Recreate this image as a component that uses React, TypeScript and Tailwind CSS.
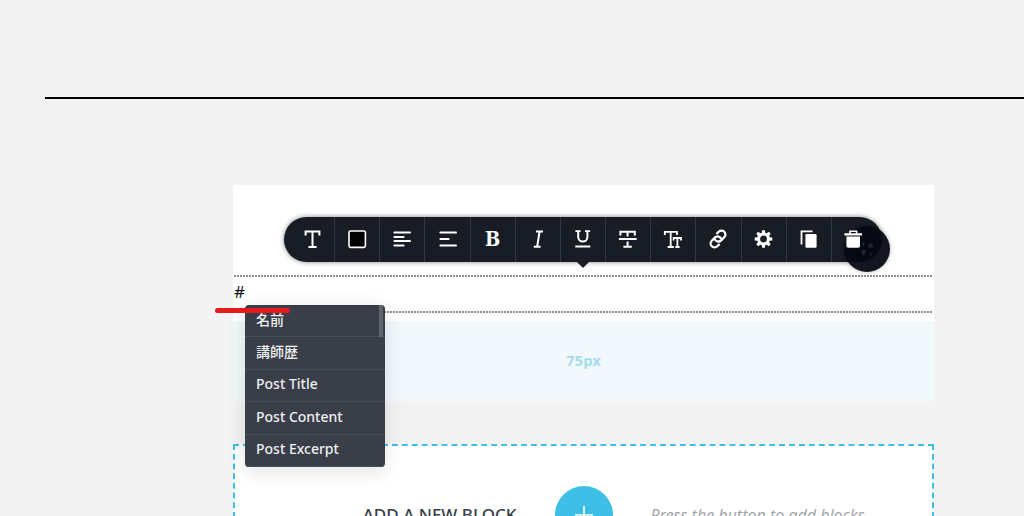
import type { ReactNode } from 'react';

const stroke = { fill: 'none', stroke: 'currentColor', strokeWidth: 2 } as const;

function Icon({ children }: { children: ReactNode }) {
  return (
    <svg viewBox="0 0 20 20" className="size-5 shrink-0" aria-hidden="true">
      {children}
    </svg>
  );
}

const tools: { label: string; icon: ReactNode }[] = [
  {
    label: 'Text style',
    icon: (
      <Icon>
        <path {...stroke} strokeWidth={2} d="M3.6 6.5V2.5H17.4V6.5M10.5 2.5V18M6.4 18H14.6" />
      </Icon>
    ),
  },
  {
    label: 'Colour',
    icon: (
      <Icon>
        <rect x="2" y="2" width="16.4" height="16.4" rx="1.6" fill="#000" stroke="#fff" strokeWidth="1.6" />
      </Icon>
    ),
  },
  {
    label: 'Align',
    icon: (
      <Icon>
        <path {...stroke} strokeLinecap="round" d="M2.4 3.6H18M2.4 7.9H11.6M2.4 12.1H18M2.4 16.4H11.6" />
      </Icon>
    ),
  },
  {
    label: 'Line height',
    icon: (
      <Icon>
        <path {...stroke} strokeLinecap="round" d="M2.4 3.6H18M2.4 10H10.6M2.4 16.4H18" />
      </Icon>
    ),
  },
  {
    label: 'Bold',
    icon: <span className="font-['DejaVu_Serif_Condensed','DejaVu_Serif',serif] text-xl leading-5 font-bold">B</span>,
  },
  {
    label: 'Italic',
    icon: (
      <Icon>
        <path {...stroke} strokeWidth={2} d="M8 2.5H15M11.6 2.5L9.1 17.8M5.8 17.8H12.6" />
      </Icon>
    ),
  },
  {
    label: 'Underline',
    icon: (
      <Icon>
        <path {...stroke} d="M5.2 2V8A4.6 4.6 0 0 0 14.4 8V2M2.3 17.6H17.3" />
        <path {...stroke} strokeWidth={1.7} d="M2.4 2.2H7.6M12 2.2H17.2" />
      </Icon>
    ),
  },
  {
    label: 'Strikethrough',
    icon: (
      <Icon>
        <path {...stroke} strokeWidth={2} d="M2.4 6.4V2.8H16.8V6.4M9.6 2.8V7.6M0.9 10.1H18.6M9.6 12.6V17.8M5.4 17.8H13.8" />
      </Icon>
    ),
  },
  {
    label: 'Font size',
    icon: (
      <Icon>
        <path {...stroke} strokeWidth={1.8} d="M1.8 6V2.9H14V6M7.7 2.9V18M4.6 18H10.8" />
        <path {...stroke} strokeWidth={1.8} d="M10.6 11.6V9H18V11.6M14.4 9V18M12.4 18H16.6" />
      </Icon>
    ),
  },
  {
    label: 'Link',
    icon: (
      <Icon>
        <g transform="rotate(-45 10 10)" {...stroke} strokeWidth={2.3}>
          <path d="M7.6 14.6H4.4A3.9 3.9 0 0 1 4.4 6.8H8.8A3.9 3.9 0 0 1 12.2 12.6" />
          <path d="M12.4 5.4H15.6A3.9 3.9 0 0 1 15.6 13.2H11.2A3.9 3.9 0 0 1 7.8 7.4" />
        </g>
      </Icon>
    ),
  },
  {
    label: 'Settings',
    icon: (
      <Icon>
        <circle {...stroke} cx="9.5" cy="10" r="4.9" strokeWidth="3" />
        {[0, 45, 90, 135, 180, 225, 270, 315].map((a) => (
          <path key={a} fill="currentColor" transform={`translate(-0.5 0) rotate(${a} 10 10)`} d="M8.2 4.5L8.6 1.2H11.4L11.8 4.5Z" />
        ))}
      </Icon>
    ),
  },
  {
    label: 'Duplicate',
    icon: (
      <Icon>
        <path {...stroke} strokeWidth={1.8} d="M2.5 15.4V2.3H13.6" />
        <rect x="6.4" y="5" width="11.2" height="13.8" rx="1.2" fill="currentColor" />
      </Icon>
    ),
  },
  {
    label: 'Delete',
    icon: (
      <Icon>
        <path {...stroke} strokeWidth={1.6} d="M6 5V2.2H12.6V5" />
        <path fill="currentColor" d="M0.4 4.2H18V6.6H0.4ZM2.4 7.4H16V17A1.8 1.8 0 0 1 14.2 18.8H4.2A1.8 1.8 0 0 1 2.4 17Z" />
      </Icon>
    ),
  },
];

const fields = ['名前', '講師歴', 'Post Title', 'Post Content', 'Post Excerpt'];

function Toolbar() {
  return (
    <div className="relative mr-[52px] ml-[51px] flex h-[45px] rounded-full bg-[#181d25] px-[6px] text-white shadow-[0_0_5px_rgba(0,0,0,0.5)]" role="toolbar" aria-label="Formatting">
      <div className="absolute top-[9px] -right-2 flex size-[46px] items-center justify-center rounded-full bg-[#050912]/94 text-[#1f252e] shadow-[0_0_4px_rgba(0,0,0,0.3)]">
        <svg viewBox="0 0 14 16" className="h-4 w-3.5" aria-hidden="true">
          <path d="M3.5 1v4M10.5 11v4" stroke="currentColor" strokeWidth="1.6" />
          <path d="M3.5 15L1 11A2.5 2.5 0 1 1 6 11ZM10.5 1L8 4.5A2.5 2.5 0 1 0 13 4.5Z" fill="currentColor" />
        </svg>
      </div>
      {tools.map((tool, index) => (
        <button
          key={tool.label}
          type="button"
          aria-label={tool.label}
          className={`relative flex flex-1 items-center justify-center border-[#31363f] pb-0.5 ${index < tools.length - 1 ? 'border-r' : ''}`}
        >
          {tool.icon}
        </button>
      ))}
      <span className="absolute top-full left-1/2 size-0 -translate-x-1/2 border-x-[6px] border-t-[6px] border-x-transparent border-t-[#181d25]" />
    </div>
  );
}

function DottedRule() {
  return <div className="h-[2px] bg-[repeating-linear-gradient(90deg,#8a9290_0_2px,#fff_2px_3px)]" />;
}

function FieldMenu() {
  return (
    <ul className="absolute top-7 left-3 z-10 grid h-[162px] w-[140px] auto-rows-fr overflow-hidden rounded-[4px] bg-[#393e48] text-[14px] text-[#eeeff0] shadow-[0_4px_20px_rgba(0,0,0,0.12)]">
      {fields.map((field) => (
        <li key={field} className="border-b border-[#484d57] last:border-b-0">
          <button type="button" className="flex size-full items-center px-[11px] pb-0.5 text-left leading-5 font-medium">
            {field}
          </button>
        </li>
      ))}
      <li aria-hidden="true" className="absolute top-0 right-[2px] h-8 w-1 bg-[#60656e]" />
    </ul>
  );
}

export default function App() {
  return (
    <div className="h-screen overflow-hidden bg-[#f3f3f3] pt-[97px] font-['Noto_Sans','Noto_Sans_CJK_JP',sans-serif]">
      <hr className="ml-[45px] border-t-2 border-black" />
      <main className="mt-[86px] mr-[90px] ml-[233px]">
        <section className="bg-white pt-8">
          <Toolbar />
          <div className="mt-[13px] px-px">
            <DottedRule />
          </div>
          <div className="relative">
            <p className="h-[34px] px-px pt-[3px] text-[17px] leading-6 text-[#151515]">#</p>
            <div className="px-px">
              <DottedRule />
            </div>
            <FieldMenu />
            <span className="absolute top-[31px] -left-[18px] z-20 h-[5px] w-[75px] rounded-full bg-[#e51a1a]" />
          </div>
          <div className="mt-2 flex h-20 items-center justify-center bg-[#f1f9fc] pb-0.5 text-[15px] font-bold text-[#a8dcec]">75px</div>
        </section>
        <section className="mt-[43px] grid grid-cols-[1fr_58px_1fr] items-center gap-[38px] border-2 border-dashed border-[#3dbfe8] bg-white py-10">
          <h2 className="text-right text-[17px] leading-6 font-medium whitespace-nowrap text-[#393e48]">ADD A NEW BLOCK</h2>
          <button type="button" aria-label="Add block" className="flex size-[58px] items-center justify-center rounded-full bg-[#3dbfe8] text-white">
            <svg viewBox="0 0 18 18" className="size-[18px]" aria-hidden="true">
              <path d="M9 0V18M0 9H18" stroke="currentColor" strokeWidth="1.6" />
            </svg>
          </button>
          <p className="text-[16px] leading-6 whitespace-nowrap text-[#a3a5ab] italic">Press the button to add blocks</p>
        </section>
      </main>
    </div>
  );
}
